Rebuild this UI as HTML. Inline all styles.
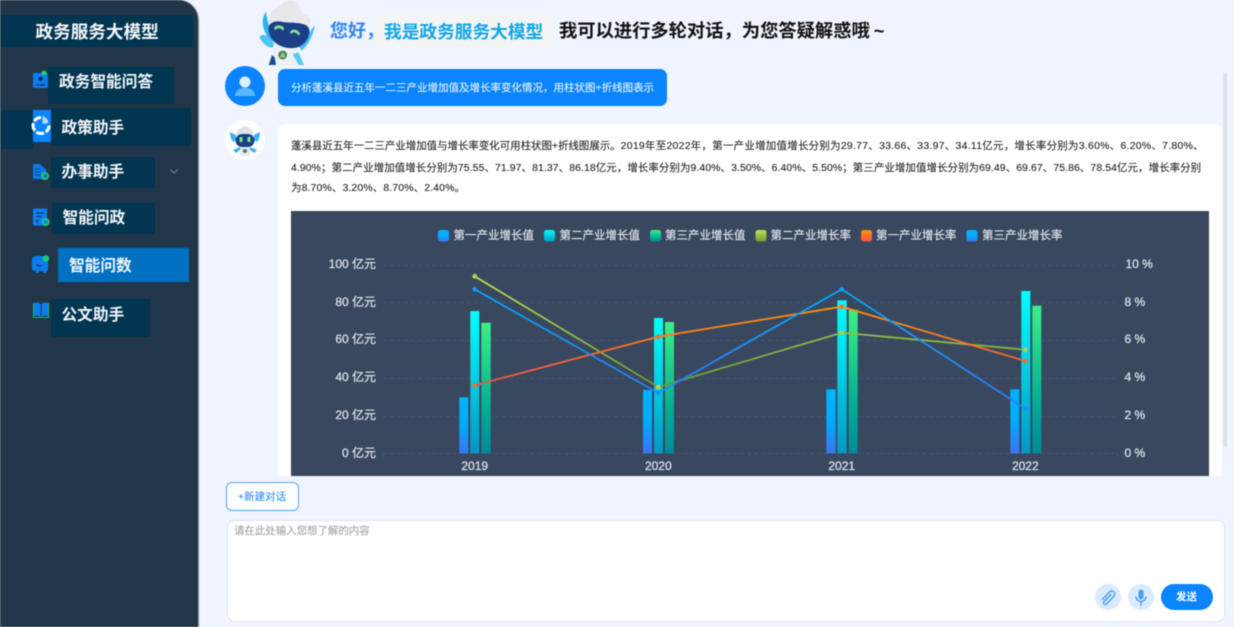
<!DOCTYPE html>
<html lang="zh-CN">
<head>
<meta charset="utf-8">
<title>政务服务大模型</title>
<style>
html,body{margin:0;padding:0;width:1234px;height:627px;overflow:hidden;background:#f0f4fe;}
body{position:relative;font-family:"Liberation Sans","Noto Sans CJK SC",sans-serif;}
.a{position:absolute;white-space:nowrap;}
.blk{position:absolute;background:#013550;}
.nav{position:absolute;color:#f2f5f8;font-size:15.7px;font-weight:700;line-height:20px;white-space:nowrap;}
.t{-webkit-text-stroke:.1px currentColor;}
#wrap{position:absolute;left:0;top:0;width:1234px;height:627px;filter:blur(.45px);}
</style>
</head>
<body>
<div id="wrap">
<svg width="0" height="0" style="position:absolute">
  <defs>
    <symbol id="robot" viewBox="0 0 225 204">
      <path d="M48 36C32 55 36 90 58 118L68 125 74 105C58 90 52 62 48 36Z" fill="#29b6ec"/>
      <path d="M28 112C40 94 54 110 74 132L66 144C50 140 36 128 28 112Z" fill="#4fc5f2"/>
      <path d="M195 75C190 105 176 134 155 152L146 138C166 118 178 96 195 75Z" fill="#49bdf0"/>
      <path d="M72 128L66 185 58 195H160L148 175 142 135Z" fill="#eef1f3"/>
      <path d="M66 165L56 195H78L74 172Z" fill="#1c4f95"/>
      <path d="M128 163L146 195H162L146 157Z" fill="#55c9f2"/>
      <path d="M56 52C58 30 82 28 92 14 110 -4 134 -2 142 10 154 22 150 40 170 46 186 54 184 74 170 80L58 72Z" fill="#e6e8ea"/>
      <path d="M56 92C52 70 72 60 98 66 124 70 172 64 178 88 182 114 160 142 132 144 94 148 60 126 56 92Z" fill="#1c4088"/>
      <path d="M72 84C78 72 98 74 103 86L99 92C92 83 82 82 75 91Z" fill="#86e292"/>
      <path d="M120 96C126 84 146 88 150 102L146 107C138 96 130 94 123 102Z" fill="#86e292"/>
      <circle cx="98" cy="165" r="13" fill="#3f7f68"/>
      <path d="M98 155L107 172H89Z" fill="#9ad06a"/>
    </symbol>
    <linearGradient id="b1" x1="0" y1="0" x2="0" y2="1"><stop offset="0" stop-color="#00b4ff"/><stop offset=".5" stop-color="#00aaff"/><stop offset="1" stop-color="#3a75f5"/></linearGradient>
    <linearGradient id="b2" x1="0" y1="0" x2="0" y2="1"><stop offset="0" stop-color="#00ffff"/><stop offset="1" stop-color="#0398c4"/></linearGradient>
    <linearGradient id="b3" x1="0" y1="0" x2="0" y2="1"><stop offset="0" stop-color="#3cf085"/><stop offset=".7" stop-color="#00a896"/><stop offset="1" stop-color="#008a9a"/></linearGradient>
    <linearGradient id="s4" x1="0" y1="0" x2="0" y2="1"><stop offset="0" stop-color="#bfe05a"/><stop offset="1" stop-color="#6f9f35"/></linearGradient>
    <linearGradient id="s5" x1="0" y1="0" x2="0" y2="1"><stop offset="0" stop-color="#ff9500"/><stop offset="1" stop-color="#ff4d4d"/></linearGradient>
    <linearGradient id="lg" gradientUnits="userSpaceOnUse" x1="0" y1="276" x2="0" y2="390"><stop offset="0" stop-color="#c2dc55"/><stop offset="1" stop-color="#5f9a35"/></linearGradient>
    <linearGradient id="lb" gradientUnits="userSpaceOnUse" x1="0" y1="289" x2="0" y2="409"><stop offset="0" stop-color="#00aaff"/><stop offset="1" stop-color="#3377f5"/></linearGradient>
    <linearGradient id="lo" gradientUnits="userSpaceOnUse" x1="0" y1="306" x2="0" y2="386"><stop offset="0" stop-color="#ff9500"/><stop offset="1" stop-color="#f04f4f"/></linearGradient>
  </defs>
</svg>

<!-- Sidebar -->
<div class="a" style="left:0;top:0;width:198px;height:627px;background:#22364a;border-top-right-radius:20px;box-shadow:1px 0 1px #7f8b99;"></div>
<div class="blk" style="left:1px;top:15px;width:192px;height:32px;"></div>
<div class="a" style="left:35.500px;top:21px;color:#f4f6f8;font-size:17.600px;font-weight:700;line-height:22px;">政务服务大模型</div>

<div class="blk" style="left:48px;top:67px;width:126px;height:37px;"></div>
<div class="blk" style="left:1px;top:110px;width:32px;height:39px;"></div>
<div class="blk" style="left:51px;top:108px;width:140px;height:38px;"></div>
<div class="blk" style="left:51px;top:157px;width:104px;height:31px;"></div>
<div class="blk" style="left:52px;top:203px;width:103px;height:31px;"></div>
<div class="blk" style="left:58px;top:248px;width:131px;height:34px;background:#0070c2;"></div>
<div class="blk" style="left:51px;top:299px;width:99px;height:38px;"></div>
<div class="a" style="left:33px;top:110px;width:18px;height:32px;background:#0a84ff;"></div>

<div class="nav" style="left:59px;top:73px;">政务智能问答</div>
<div class="nav" style="left:61.500px;top:119px;">政策助手</div>
<div class="nav" style="left:61.500px;top:163px;">办事助手</div>
<div class="nav" style="left:62.500px;top:209px;">智能问政</div>
<div class="nav" style="left:69px;top:257px;">智能问数</div>
<div class="nav" style="left:61.500px;top:306px;">公文助手</div>

<svg class="a" style="left:0;top:0;" width="198" height="340" viewBox="0 0 198 340">
  <path d="M33 73h13a2 2 0 0 1 2 2v11a2 2 0 0 1-2 2H35a2 2 0 0 1-2-2Z" fill="#0a7df0"/>
  <circle cx="40.500" cy="79" r="2.200" fill="#0a2f55"/><path d="M36 85h9" stroke="#0a2f55" stroke-width="1.200"/>
  <circle cx="44" cy="73" r="2.400" fill="#22d37a"/>
  <path d="M41 117.500a8 8 0 1 0 8 8" fill="none" stroke="#fff" stroke-width="3" stroke-dasharray="8 2"/>
  <path d="M42.500 116a8 8 0 0 1 6 7l-6 1Z" fill="#b5d8ff"/>
  <path d="M33 164h7l6 6v9H33Z" fill="#0a7df0"/>
  <path d="M35 169h6M35 172h6M35 175h6" stroke="#0a3c78" stroke-width="1"/>
  <circle cx="45" cy="176" r="3" fill="none" stroke="#16cf70" stroke-width="2"/>
  <path d="M170 169.500l4 3.500 4-3.500" fill="none" stroke="#7a8794" stroke-width="1.100"/>
  <rect x="33" y="208.500" width="14" height="17" rx="1.500" fill="#0a7df0"/>
  <path d="M36 213h8M36 216.500h6" stroke="#0a3c78" stroke-width="1.200"/><circle cx="37" cy="221" r="1.300" fill="#0a3c78"/>
  <circle cx="45.500" cy="222" r="3" fill="#0a7df0" stroke="#16cf70" stroke-width="2"/>
  <path d="M36 256h8a6 6 0 0 1 4 3v10a2 2 0 0 1-2 2H35a3 3 0 0 1-3-3v-8a4 4 0 0 1 4-4Z" fill="#0a7df0"/>
  <path d="M36 271h3v2h-3ZM43 271h3v2h-3Z" fill="#0a7df0"/>
  <path d="M37 264l3 1.500 4-1-4 2.500-4-1Z" fill="#0a3c78"/>
  <circle cx="46" cy="258.500" r="3.200" fill="#16cf70"/>
  <path d="M33 303h1v14h14v-14h1v15H33Z" fill="#14b86a"/>
  <path d="M34 303q3.500-1.500 6.500 1v13q-3-2-6.500-1Z" fill="#0a7df0"/>
  <path d="M48 303q-3.500-1.500-6.500 1v13q3-2 6.500-1Z" fill="#0a7df0"/>
</svg>

<!-- Header -->
<svg class="a" style="left:250px;top:0;" width="75" height="68"><use href="#robot" width="75" height="68"/></svg>
<div class="a" style="left:330px;top:20px;font-size:18px;font-weight:700;line-height:22px;color:#2f86f5;">您好&#xFF0C;</div>
<div class="a" style="left:373px;top:13px;width:181px;height:37px;background:#f3f4f5;"></div>
<div class="a" style="left:384px;top:21px;font-size:17.700px;font-weight:700;line-height:22px;color:#14a6e4;">我是政务服务大模型</div>
<div class="a" style="left:559px;top:20px;font-size:18.300px;font-weight:700;line-height:22px;color:#111;">我可以进行多轮对话&#xFF0C;为您答疑解惑哦<span style="margin-left:4px;">~</span></div>

<!-- Scrollbar -->
<div class="a" style="left:1223px;top:73px;width:3.500px;height:374px;background:#dfe2e8;"></div>

<!-- User message -->
<svg class="a" style="left:225px;top:66px;" width="40" height="40" viewBox="0 0 40 40">
  <circle cx="20" cy="20" r="20" fill="#0a84ff"/>
  <circle cx="20" cy="16" r="5.500" fill="#dff0ff"/>
  <path d="M10 30c0-11 20-11 20 0Z" fill="#5cb6ff"/>
</svg>
<div class="a" style="left:278px;top:69px;width:389px;height:37px;background:#0a84ff;border-radius:7px;"></div>
<div class="a t" style="left:291px;top:81px;font-size:10.500px;line-height:14px;color:#e9f4ff;">分析蓬溪县近五年一二三产业增加值及增长率变化情况&#xFF0C;用柱状图+折线图表示</div>

<!-- Bot message -->
<div class="a" style="left:225px;top:120px;width:40px;height:40px;border-radius:50%;background:#fff;"></div>
<svg class="a" style="left:227px;top:122px;" width="36" height="36" viewBox="0 0 36 36">
  <path d="M9 13q1-6 5-7 4-4 8 0 4 1 5 7Z" fill="#dfe3e6"/>
  <path d="M3 10l6 3v5l-3 2Q3 16 3 10ZM33 10l-6 3v5l3 2q3-4 3-10Z" fill="#35b6ee"/>
  <rect x="8.500" y="12" width="19" height="13" rx="6.500" fill="#1c4088"/>
  <path d="M12.500 15h3v5h-3ZM20.500 15h3v5h-3Z" fill="#7fe08e"/>
  <path d="M13 25h10v9H13Z" fill="#e4e9ec"/>
  <path d="M6 28l7-3v3l-4 3ZM30 28l-7-3v3l4 3Z" fill="#35b6ee"/>
  <circle cx="18" cy="29" r="2" fill="#3f7f68"/>
</svg>
<div class="a" style="left:278px;top:124px;width:944px;height:352px;background:#fff;border-radius:7px 7px 0 0;"></div>
<div class="a t" style="left:291px;top:140px;font-size:10.450px;line-height:14px;color:#222;">蓬溪县近五年一二三产业增加值与增长率变化可用柱状图+折线图展示。<span style="letter-spacing:.28px;">2019年至2022年&#xFF0C;第一产业增加值增长分别为29.77、33.66、33.97、34.11亿元&#xFF0C;增长率分别为3.60%、6.20%、7.80%、</span></div>
<div class="a t" style="left:291px;top:162px;font-size:10.450px;line-height:14px;color:#222;letter-spacing:.09px;">4.90%&#xFF1B;第二产业增加值增长分别为75.55、71.97、81.37、86.18亿元&#xFF0C;增长率分别为9.40%、3.50%、6.40%、5.50%&#xFF1B;第三产业增加值增长分别为69.49、69.67、75.86、78.54亿元&#xFF0C;增长率分别</div>
<div class="a t" style="left:291px;top:182px;font-size:10.450px;line-height:14px;color:#222;letter-spacing:.14px;">为8.70%、3.20%、8.70%、2.40%。</div>

<!-- Chart -->
<svg class="a" style="left:291px;top:211px;" width="918" height="265" viewBox="291 211 918 265" font-family="'Liberation Sans','Noto Sans CJK SC',sans-serif">
  <rect x="291" y="211" width="918" height="265" fill="#39475f"/>
  <g stroke="#3c5a70" stroke-width="1" stroke-dasharray="4 3" fill="none">
    <path d="M383 265.500H1118M383 302.500H1118M383 340.500H1118M383 378.500H1118M383 416.500H1118M383 453.500H1118"/>
  </g>
  <path d="M383 453v4M566.500 453v4M750 453v4M933.500 453v4M1117.500 453v4" stroke="#3c5a70"/>

  <g fill="url(#b1)">
    <rect x="459.300" y="397.300" width="9" height="56"/><rect x="643" y="390" width="9" height="63.300"/>
    <rect x="826.300" y="389.300" width="9.400" height="64"/><rect x="1010.300" y="389.300" width="9" height="64"/>
  </g>
  <g fill="url(#b2)">
    <rect x="470.300" y="311" width="9" height="142.300"/><rect x="654" y="318" width="9" height="135.300"/>
    <rect x="837.300" y="300.300" width="9.400" height="153"/><rect x="1021.300" y="291" width="9" height="162.300"/>
  </g>
  <g fill="url(#b3)">
    <rect x="481.300" y="322.700" width="9.400" height="130.600"/><rect x="665" y="322" width="9" height="131.300"/>
    <rect x="848.700" y="310" width="9" height="143.300"/><rect x="1032.300" y="305.700" width="9" height="147.600"/>
  </g>

  <g fill="none" stroke-width="1.800" stroke-linejoin="round">
    <polyline points="474.700,276.300 658.300,387 841.700,332.700 1025.300,349.700" stroke="url(#lg)"/>
    <polyline points="474.700,385.300 658.300,336.700 841.700,306.700 1025.300,361" stroke="url(#lo)"/>
    <polyline points="474.700,289.300 658.300,393 841.700,289.300 1025.300,408.700" stroke="url(#lb)"/>
  </g>
  <g fill="#b5d24f"><circle cx="474.700" cy="276.300" r="2.400"/><circle cx="658.300" cy="387" r="2.400"/><circle cx="841.700" cy="332.700" r="2.400"/><circle cx="1025.300" cy="349.700" r="2.400"/></g>
  <g fill="#f5702f"><circle cx="474.700" cy="385.300" r="2.400"/><circle cx="658.300" cy="336.700" r="2.400"/><circle cx="841.700" cy="306.700" r="2.400"/><circle cx="1025.300" cy="361" r="2.400"/></g>
  <g fill="#1a95f5"><circle cx="474.700" cy="289.300" r="2.400"/><circle cx="658.300" cy="393" r="2.400"/><circle cx="841.700" cy="289.300" r="2.400"/><circle cx="1025.300" cy="408.700" r="2.400"/></g>

  <g>
    <rect x="438" y="230" width="11" height="11.500" rx="2.500" fill="url(#b1)"/>
    <rect x="544" y="230" width="11" height="11.500" rx="2.500" fill="url(#b2)"/>
    <rect x="650" y="230" width="11" height="11.500" rx="2.500" fill="url(#b3)"/>
    <rect x="755.500" y="230" width="11" height="11.500" rx="2.500" fill="url(#s4)"/>
    <rect x="861" y="230" width="11" height="11.500" rx="2.500" fill="url(#s5)"/>
    <rect x="966.500" y="230" width="11" height="11.500" rx="2.500" fill="url(#b1)"/>
  </g>
  <g fill="#dfe4ea" font-size="11.500" stroke="#dfe4ea" stroke-width=".15">
    <text x="453.500" y="239">第一产业增长值</text>
    <text x="559.500" y="239">第二产业增长值</text>
    <text x="665" y="239">第三产业增长值</text>
    <text x="770.500" y="239">第二产业增长率</text>
    <text x="876" y="239">第一产业增长率</text>
    <text x="982" y="239">第三产业增长率</text>
  </g>
  <g fill="#dfe4ea" font-size="12" text-anchor="end" stroke="#dfe4ea" stroke-width=".25">
    <text x="376" y="268">100 亿元</text>
    <text x="376" y="306">80 亿元</text>
    <text x="376" y="343">60 亿元</text>
    <text x="376" y="381">40 亿元</text>
    <text x="376" y="419">20 亿元</text>
    <text x="376" y="457">0 亿元</text>
  </g>
  <g fill="#dfe4ea" font-size="12" stroke="#dfe4ea" stroke-width=".25">
    <text x="1125.500" y="268">10 %</text>
    <text x="1124.500" y="306">8 %</text>
    <text x="1124.500" y="343">6 %</text>
    <text x="1124.500" y="381">4 %</text>
    <text x="1124.500" y="419">2 %</text>
    <text x="1124.500" y="457">0 %</text>
  </g>
  <g fill="#dfe4ea" font-size="12" text-anchor="middle" stroke="#dfe4ea" stroke-width=".25">
    <text x="474.700" y="470">2019</text>
    <text x="658.300" y="470">2020</text>
    <text x="841.700" y="470">2021</text>
    <text x="1025.300" y="470">2022</text>
  </g>
</svg>

<!-- New chat -->
<div class="a" style="left:225.500px;top:482px;width:71px;height:27px;background:#fff;border:1.500px solid #4da6ff;border-radius:6px;"></div>
<div class="a t" style="left:238px;top:490px;font-size:10.500px;line-height:14px;color:#2f8ff5;">+新建对话</div>

<!-- Input -->
<div class="a" style="left:227px;top:520px;width:996px;height:100px;background:#fff;border:1.500px solid #dde3ee;border-radius:8px;"></div>
<div class="a t" style="left:234px;top:525px;font-size:10.450px;line-height:14px;color:#a3a3a3;">请在此处输入您想了解的内容</div>
<svg class="a" style="left:1095px;top:584px;" width="60" height="26" viewBox="0 0 60 26">
  <circle cx="13" cy="13" r="13" fill="#d9eaff"/>
  <circle cx="46" cy="13" r="13" fill="#d9eaff"/>
  <path d="M7.500 15.500l7-7.500a3 3 0 0 1 4.500 4l-7.500 8a1.700 1.700 0 0 1-2.500-2.400l7-7.200" fill="none" stroke="#4a9df5" stroke-width="1.400" stroke-linecap="round"/>
  <rect x="43.500" y="5.500" width="5" height="10" rx="2.500" fill="#4a9df5"/>
  <path d="M41 12.500c0 6.500 10 6.500 10 0M46 18v4" fill="none" stroke="#4a9df5" stroke-width="1.400"/>
</svg>
<div class="a" style="left:1161px;top:584px;width:52px;height:26px;background:#0a84ff;border-radius:13px;"></div>
<div class="a" style="left:1176px;top:590px;font-size:10.500px;font-weight:700;line-height:14px;color:#fff;">发送</div>
</div>
</body>
</html>
